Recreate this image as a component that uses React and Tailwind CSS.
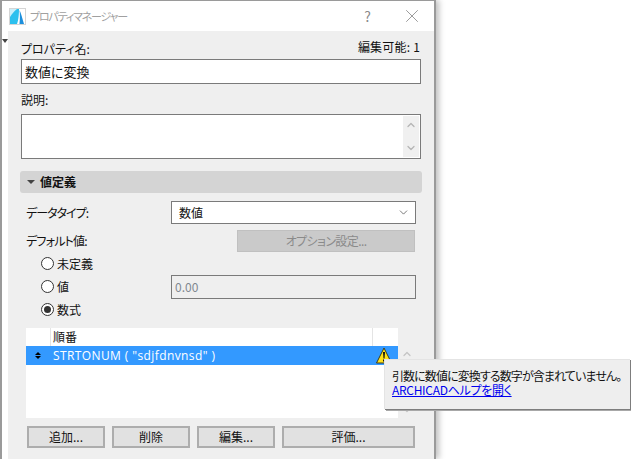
import { ChevronDown, ChevronUp, X } from "lucide-react";

const font = { fontFamily: '"Noto Sans CJK JP", "Noto Sans", sans-serif' };

function Radio({ label, checked }) {
  return (
    <div className="flex h-[23px] items-center gap-[3px]">
      <div className="flex h-[13px] w-[13px] items-center justify-center rounded-full border border-[#333] bg-white">
        {checked && <div className="h-[7px] w-[7px] rounded-full bg-[#333]"></div>}
      </div>
      <span>{label}</span>
    </div>
  );
}

function FootButton({ label, width }) {
  return (
    <div className={`flex h-[22px] items-center justify-center border-2 border-[#adadad] bg-[#e1e1e1] ${width}`}>
      {label}
    </div>
  );
}

export default function App() {
  return (
    <div className="relative h-[459px] w-[631px] overflow-hidden bg-white text-[12px] leading-[16px] text-[#111] [font-feature-settings:'palt']" style={font}>

      {/* WINDOW */}
      <div className="h-[459px] w-[436px] border-t border-r-2 border-l-2 border-[#9a9a9a] bg-white shadow-[3px_0_6px_rgba(0,0,0,0.25)]">

        {/* TITLE */}
        <div className="flex h-[30px] items-center bg-white pl-[7px]">
          <svg width="17" height="17" viewBox="0 0 17 17">
            <rect x="0.5" y="0.5" width="16" height="16" fill="#ffffff" stroke="#d5d5d5" />
            <path d="M1 16 V1 H10 C10 6 9.5 12 8 16 Z" fill="#2cc0ee" />
            <path d="M1 1 H8 C5 3 3 6 1 9 Z" fill="#c9effa" />
            <path d="M10.5 2 C12 5 13.5 11 15 16 H10.5 C11 11 11 6 10.5 2 Z" fill="#1c8fdc" />
          </svg>
          <span className="ml-[4px] text-[11px] tracking-[-1.2px] text-[#a0a0a0]">プロパティマネージャー</span>
          <span className="ml-auto text-[14px] text-[#8a8a8a]">?</span>
          <X size={22} strokeWidth={0.8} className="mr-[11px] ml-[30px] text-[#777]" />
        </div>

        <div className="flex">
          {/* LEFT STRIP */}
          <div className="w-[6px] shrink-0 bg-white pt-[8px]">
            <div className="h-0 w-0 border-x-[3px] border-t-[4px] border-x-transparent border-t-[#444]"></div>
          </div>

          {/* PANEL */}
          <div className="h-[430px] flex-1 bg-[#efefef] pt-[8px] pr-[13px] pl-[13px]">

            <div className="flex h-[20px] items-center justify-between">
              <span>プロパティ名:</span>
              <span className="-mt-[5px] mr-px tracking-[0.2px]">編集可能: 1</span>
            </div>
            <div className="flex h-[25px] items-center border border-[#7a7a7a] bg-white px-[3px] text-[13px]">数値に変換</div>

            <div className="mt-[4px] flex h-[24px] items-center">説明:</div>
            <div className="mt-[2px] flex h-[45px] justify-end border border-[#7a7a7a] bg-white p-[1px]">
              <div className="flex w-[16px] flex-col items-center justify-between bg-[#f0f0f0] py-[3px] text-[#b5b5b5]">
                <ChevronUp size={12} strokeWidth={2.5} />
                <ChevronDown size={12} strokeWidth={2.5} />
              </div>
            </div>

            {/* SECTION */}
            <div className="mt-[12px] -mr-px -ml-px flex h-[22px] items-center gap-[5px] rounded-[3px] bg-[#d4d4d4] pl-[7px] font-bold">
              <div className="h-0 w-0 border-x-[4px] border-t-[4px] border-x-transparent border-t-[#444]"></div>
              <span>値定義</span>
            </div>

            <div className="mt-[8px] ml-[5px] flex h-[23px] items-center">
              <span className="w-[145px] tracking-[-1px]">データタイプ:</span>
              <div className="flex h-[23px] w-[245px] items-center justify-between border border-[#7a7a7a] bg-white pr-[5px] pl-[7px]">
                <span>数値</span>
                <ChevronDown size={13} strokeWidth={1.2} className="text-[#333]" />
              </div>
            </div>

            <div className="mt-[6px] ml-[5px] flex h-[22px] items-center">
              <span className="w-[211px] tracking-[-0.8px]">デフォルト値:</span>
              <div className="flex h-[22px] w-[178px] items-center justify-center border border-[#c0c0c0] bg-[#cacaca] tracking-[-0.6px] text-[#8a8a8a]">オプション設定...</div>
            </div>

            <div className="ml-[20px] flex">
              <div className="w-[130px]">
                <Radio label="未定義" />
                <Radio label="値" />
                <Radio label="数式" checked />
              </div>
              <div className="mt-[23px] flex h-[24px] w-[245px] items-center border border-[#7a7a7a] px-[3px] text-[#808890]">0.00</div>
            </div>

            {/* TABLE */}
            <div className="mt-[7px] ml-[5px] flex">
              <div className="h-[90px] w-[372px] bg-white">
                <div className="flex h-[18px]">
                  <div className="w-[25px] border-r border-[#e4e4e4]"></div>
                  <div className="flex-1 border-r border-[#e4e4e4] pt-px pl-[2px]">順番</div>
                  <div className="w-[25px]"></div>
                </div>
                <div className="flex h-[19px] items-center bg-[#3399ff] text-white">
                  <div className="flex w-[25px] flex-col items-center justify-center gap-[1px] pr-[2px]">
                    <div className="h-0 w-0 border-x-[3px] border-b-[3px] border-x-transparent border-b-black"></div>
                    <div className="h-0 w-0 border-x-[3px] border-t-[3px] border-x-transparent border-t-black"></div>
                  </div>
                  <span className="ml-[2px] tracking-[0.4px]" style={{ fontFamily: '"Open Sans", sans-serif' }}>STRTONUM ( "sdjfdnvnsd" )</span>
                  <svg className="mr-[6px] ml-auto" width="16" height="17" viewBox="0 0 16 17">
                    <path d="M8 1 L15.5 16 L0.5 16 Z" fill="#ffe21a" stroke="#3a3a20" strokeWidth="1" strokeLinejoin="round" />
                    <path d="M7 5 H9 L8.5 11.5 H7.5 Z" fill="#111" />
                    <rect x="7" y="12.5" width="2" height="2" fill="#111" />
                  </svg>
                </div>
              </div>
              <div className="flex h-[90px] w-[17px] flex-col items-center justify-between pt-[20px] pb-[2px] text-[#c4c4c4]">
                <ChevronUp size={12} strokeWidth={2.5} />
                <ChevronDown size={12} strokeWidth={2.5} />
              </div>
            </div>

            {/* BUTTONS */}
            <div className="mt-[8px] ml-[6px] flex gap-[7px]">
              <FootButton label="追加..." width="w-[78px]" />
              <FootButton label="削除" width="w-[78px]" />
              <FootButton label="編集..." width="w-[78px]" />
              <FootButton label="評価..." width="w-[133px]" />
            </div>

          </div>
        </div>
      </div>

      {/* TOOLTIP */}
      <div className="absolute top-[359px] left-[384px] h-[50px] w-[246px] border-t border-l border-[#e4e4e4] bg-[#eeeeee] pt-[9px] pl-[7px] leading-[14px] whitespace-nowrap shadow-[1px_1px_0_#7d7d7d,2px_2px_0_#a8a8a8]">
        <div className="tracking-[-0.9px]">引数に数値に変換する数字が含まれていません。</div>
        <div className="tracking-[-0.3px] text-[#0000ee] underline">ARCHICADヘルプを開く</div>
      </div>
    </div>
  );
}
